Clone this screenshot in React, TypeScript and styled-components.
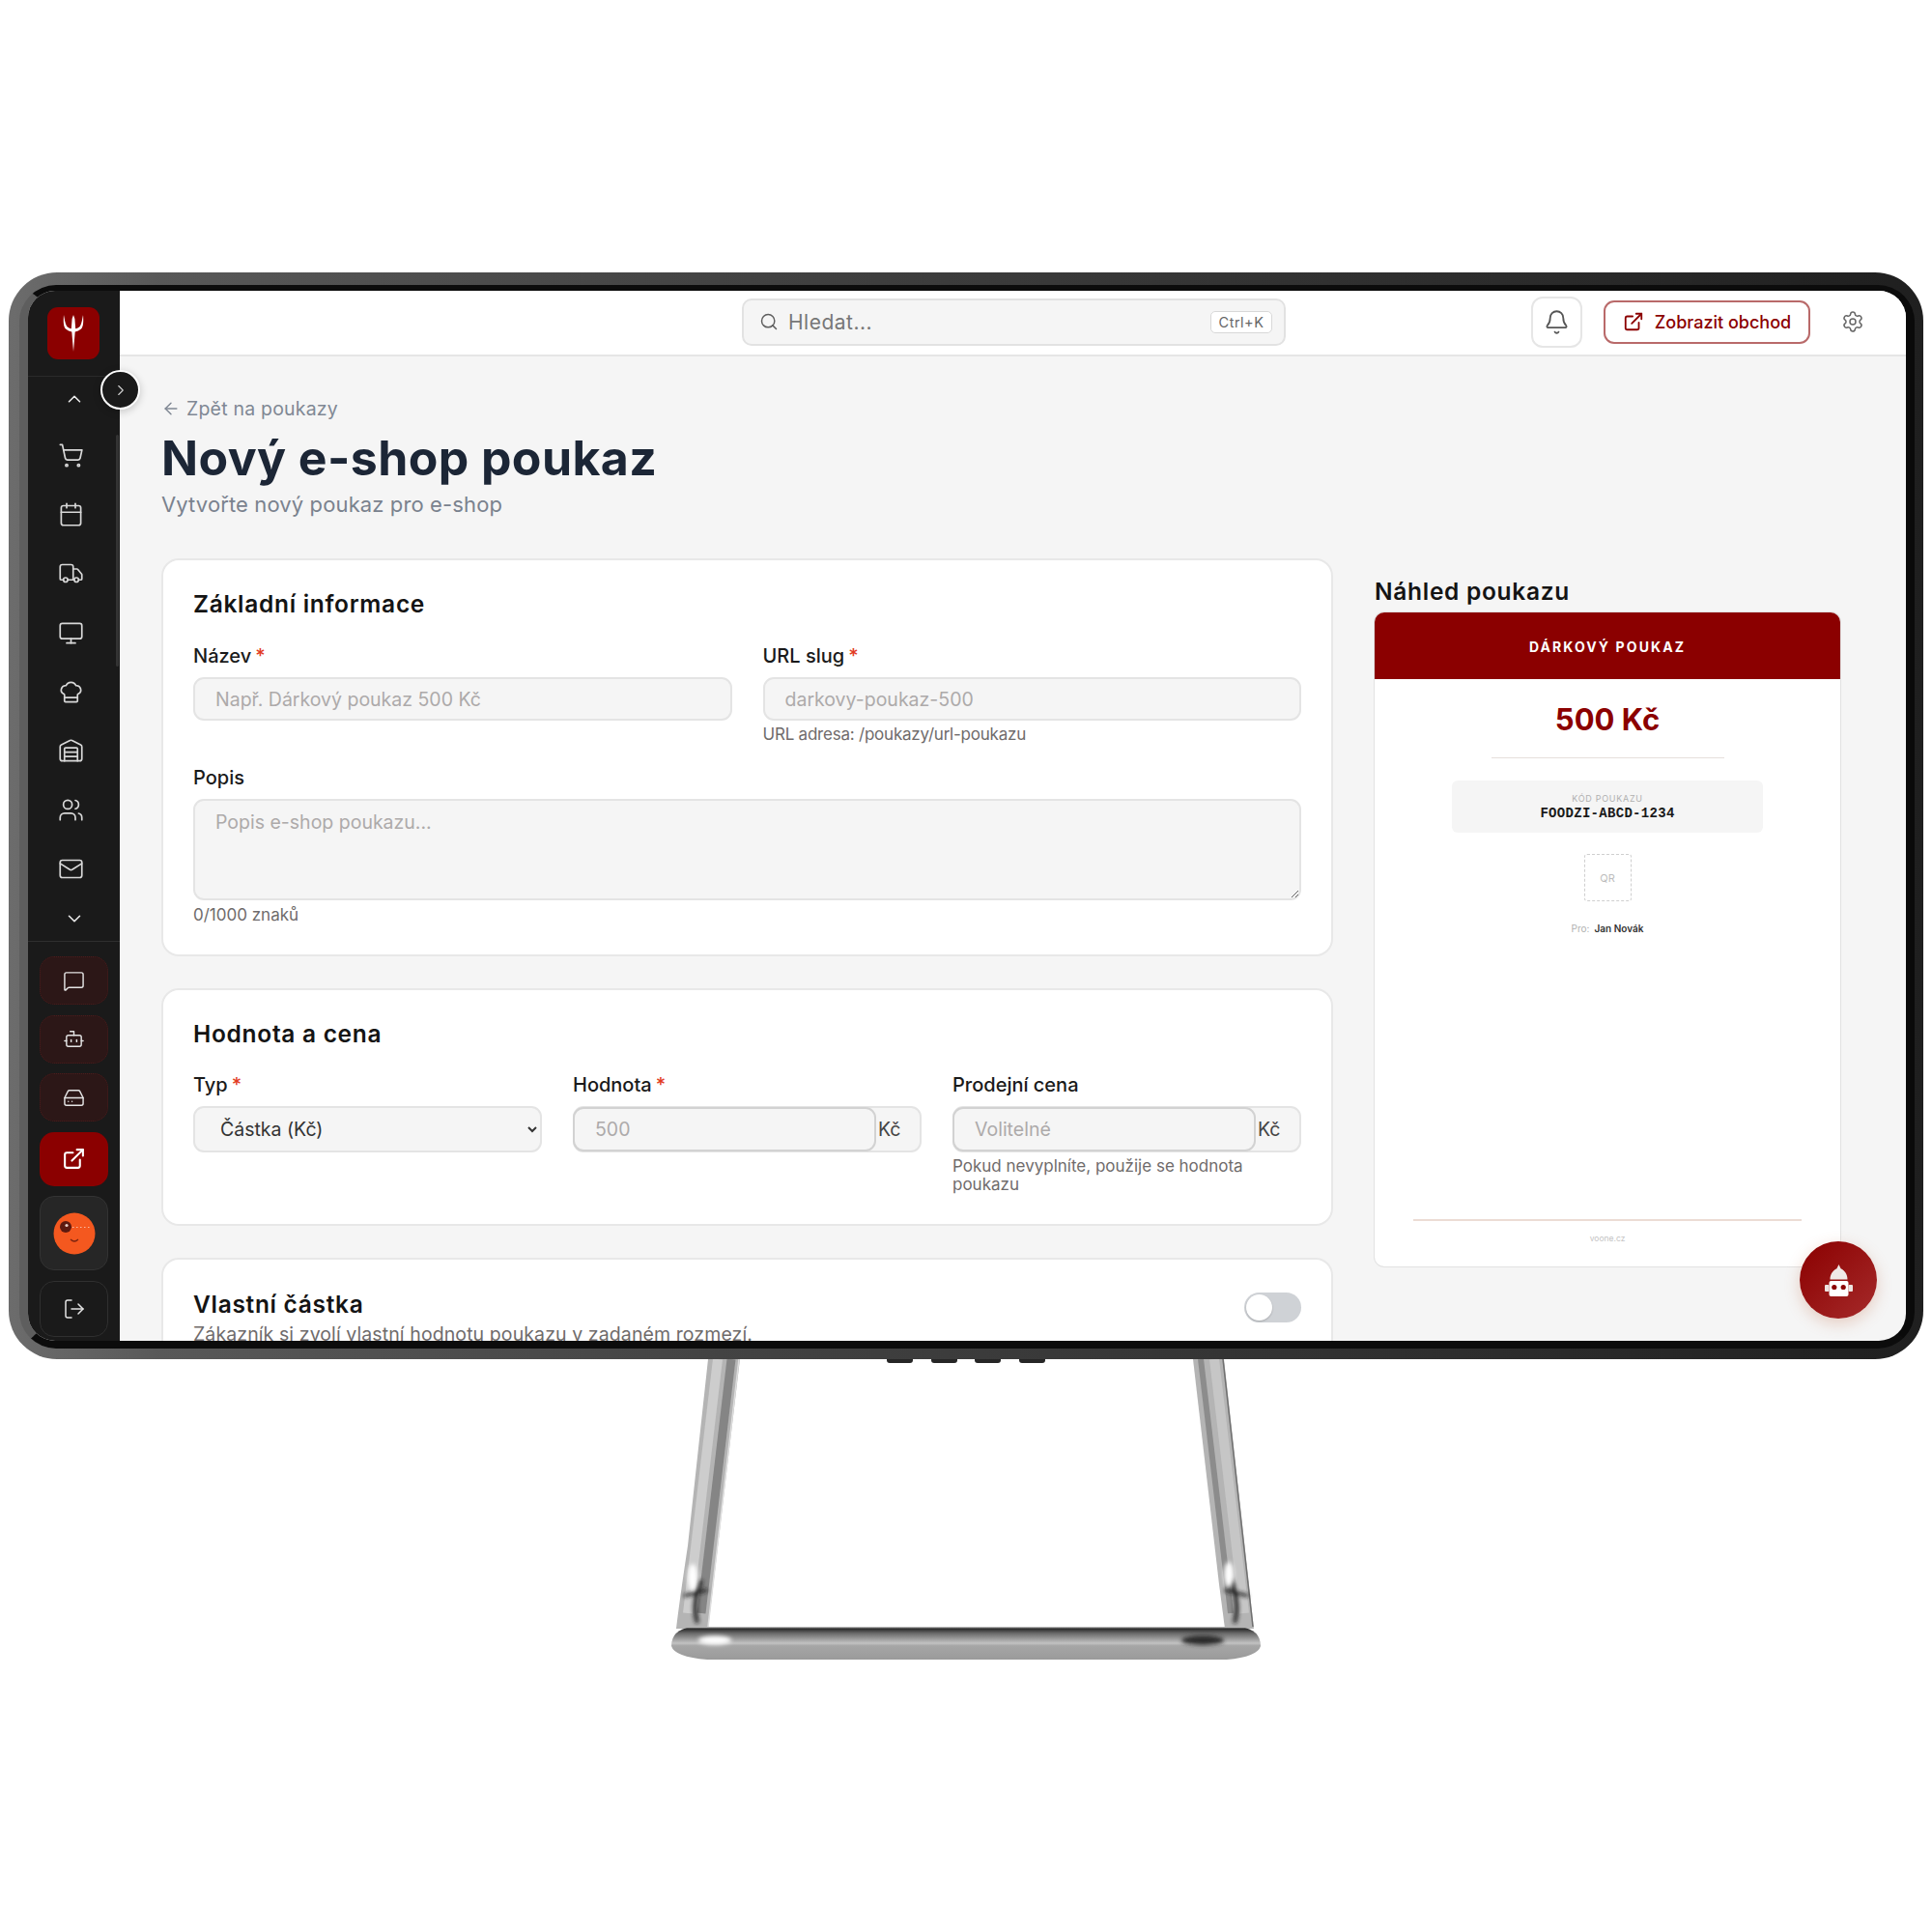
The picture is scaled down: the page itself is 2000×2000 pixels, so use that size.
import React from "react";
import styled, { createGlobalStyle } from "styled-components";
import {
  ArrowLeft,
  Bell,
  Bot,
  Calendar,
  ChefHat,
  ChevronDown,
  ChevronRight,
  ChevronUp,
  ExternalLink,
  HardDrive,
  LogOut,
  Mail,
  MessageSquare,
  Monitor as MonitorIcon,
  Search,
  Settings,
  ShoppingCart,
  Truck,
  Users,
  Warehouse,
} from "lucide-react";

const FONT = `Inter, "Open Sans", "Liberation Sans", sans-serif`;
const RED = "#8b0000";

const Global = createGlobalStyle`
  html, body { margin: 0; background: #fff; }
  * { box-sizing: border-box; }
  body { font-family: ${FONT}; }
  input::placeholder, textarea::placeholder { color: #adaaaa; opacity: 1; }
`;

const Page = styled.div`
  width: 2000px;
  height: 2000px;
  padding-top: 282px;
  display: flex;
  flex-direction: column;
  background: #fff;
  overflow: hidden;
`;

const Bezel = styled.div`
  width: 1982px;
  height: 1125px;
  margin-left: 9px;
  padding: 13px 9px 11px 11px;
  border-radius: 50px;
  background: linear-gradient(90deg, #6c6c6c 0%, #585858 8%, #414141 40%, #282828 85%, #1f1f1f 100%);
`;

const Ring = styled.div`
  width: 100%;
  height: 100%;
  border-style: solid;
  border-width: 6px 9px 8px 9px;
  border-color: #0c0c0c #0a0a0a #0c0c0c #5e5e5e;
  border-radius: 38px;
  background: #0c0c0c;
`;

const Screen = styled.div`
  position: relative;
  width: 100%;
  height: 100%;
  display: flex;
  border-radius: 28px;
  overflow: hidden;
  background: #f5f5f5;
`;

const Sidebar = styled.aside`
  position: relative;
  width: 95px;
  flex: none;
  display: flex;
  flex-direction: column;
  background: #1a1a1a;
`;

const LogoArea = styled.div`
  height: 89px;
  display: flex;
  justify-content: center;
  padding: 17px 1px 0 0;
  border-bottom: 1px solid #2a2a2a;
`;

const LogoBox = styled.div`
  width: 54px;
  height: 54px;
  border-radius: 11px;
  background: ${RED};
`;

const Nav = styled.nav`
  height: 585px;
  display: flex;
  flex-direction: column;
  border-bottom: 1px solid #2e2e2e;
`;

const NavArrow = styled.div<{ $h: number; $lift: number }>`
  height: ${(p) => p.$h}px;
  display: flex;
  align-items: center;
  justify-content: center;
  padding-bottom: ${(p) => p.$lift}px;
  color: #e8e8e8;
`;

const NavItem = styled.div`
  height: 61.2px;
  flex: none;
  display: flex;
  align-items: center;
  justify-content: center;
  padding-right: 6px;
  color: #d8d8d8;
`;

const ScrollThumb = styled.div`
  position: absolute;
  left: 91px;
  top: 149px;
  width: 3px;
  height: 240px;
  border-radius: 2px;
  background: #333;
`;

const SideActions = styled.div`
  display: flex;
  flex-direction: column;
  align-items: center;
  gap: 10.5px;
  padding-top: 15px;
`;

const TintButton = styled.div`
  width: 71px;
  height: 50px;
  display: flex;
  align-items: center;
  justify-content: center;
  border: 1px dotted #4c1c1c;
  border-radius: 15px;
  background: #2c1717;
  color: #e4e4e4;
`;

const RedButton = styled(TintButton)`
  height: 56px;
  border: none;
  background: ${RED};
  color: #fff;
`;

const AvatarBox = styled(TintButton)`
  height: 77px;
  border: 1px solid #333;
  background: #262626;
`;

const LogoutBox = styled(TintButton)`
  height: 58px;
  border: 1px solid #303030;
  background: #1a1a1a;
`;

const CollapseToggle = styled.div`
  position: absolute;
  left: 75px;
  top: 82px;
  width: 41px;
  height: 41px;
  display: flex;
  align-items: center;
  justify-content: center;
  border: 2px solid #fff;
  border-radius: 50%;
  background: #1a1a1a;
  color: #cfcfcf;
  box-shadow: 0 2px 8px rgba(0, 0, 0, 0.2);
  z-index: 3;
`;

const Main = styled.main`
  flex: 1;
  min-width: 0;
  display: flex;
  flex-direction: column;
`;

const Header = styled.header`
  height: 68px;
  flex: none;
  display: flex;
  align-items: center;
  padding: 0 43px 2px 644px;
  background: #fff;
  border-bottom: 2px solid #e6e6e6;
`;

const SearchBox = styled.div`
  width: 563px;
  height: 49px;
  display: flex;
  align-items: center;
  gap: 10px;
  padding: 0 12px 0 16px;
  border: 2px solid #e2e2e2;
  border-radius: 10px;
  background: #f5f5f5;
  color: #5e5e5e;
  font-size: 21px;
`;

const SearchText = styled.span`
  flex: 1;
  color: #777;
  letter-spacing: 0.5px;
`;

const Kbd = styled.span`
  width: 64px;
  height: 23px;
  display: flex;
  align-items: center;
  justify-content: center;
  border: 1px solid #d8d8d8;
  border-radius: 5px;
  background: #fff;
  color: #666;
  font-size: 14.5px;
  letter-spacing: 0.5px;
`;

const BellButton = styled.div`
  margin-left: auto;
  width: 53px;
  height: 53px;
  display: flex;
  align-items: center;
  justify-content: center;
  border: 2px solid #e6e6e6;
  border-radius: 12px;
  background: #fff;
  color: #555;
`;

const ShopButton = styled.div`
  margin-left: 22px;
  width: 214px;
  height: 45px;
  display: flex;
  align-items: center;
  justify-content: center;
  gap: 11px;
  border: 2px solid #b96a6a;
  border-radius: 11px;
  background: #fff;
  color: ${RED};
  font-size: 18px;
  font-weight: 500;
`;

const GearSlot = styled.div`
  margin-left: 32px;
  width: 24px;
  height: 24px;
  color: #666;
`;

const Content = styled.div`
  padding: 42px 0 0 43px;
`;

const BackLink = styled.div`
  height: 24px;
  display: flex;
  align-items: center;
  gap: 6px;
  color: #808894;
  font-size: 19.5px;
  letter-spacing: 0.2px;
`;

const Title = styled.h1`
  margin: 9px 0 0;
  font-size: 50px;
  line-height: 60px;
  font-weight: 700;
  letter-spacing: 0.4px;
  color: #1c2636;
`;

const Subtitle = styled.p`
  margin: 4px 0 0;
  font-size: 22px;
  line-height: 28px;
  color: #7a828e;
  letter-spacing: 0.12px;
`;

const Columns = styled.div`
  display: grid;
  grid-template-columns: 1213px 482px;
  column-gap: 43px;
  margin-top: 42px;
`;

const FormColumn = styled.div`
  display: flex;
  flex-direction: column;
  gap: 33px;
`;

const Card = styled.section`
  padding: 30px 31px 31px;
  border: 2px solid #e8e8e8;
  border-radius: 18px;
  background: #fff;
`;

const CardTitle = styled.h2`
  margin: 0;
  font-size: 24.5px;
  line-height: 30px;
  font-weight: 600;
  color: #141414;
  letter-spacing: 0.7px;
`;

const Grid = styled.div<{ $cols: number; $mt: number }>`
  display: grid;
  grid-template-columns: repeat(${(p) => p.$cols}, 1fr);
  column-gap: 32px;
  margin-top: ${(p) => p.$mt}px;
`;

const Label = styled.label`
  display: block;
  height: 24px;
  margin-bottom: 10px;
  font-size: 20px;
  line-height: 24px;
  font-weight: 500;
  color: #1a1a1a;
`;

const Star = styled.span`
  margin-left: 4px;
  color: #e23b22;
`;

const Input = styled.input`
  display: block;
  width: 100%;
  height: 45px;
  padding: 0 21px;
  border: 2px solid #e4e4e4;
  border-radius: 11px;
  outline: none;
  background: #f5f5f5;
  font-family: ${FONT};
  font-size: 19.5px;
`;

const TextArea = styled.textarea`
  display: block;
  width: 100%;
  height: 105px;
  padding: 10px 21px;
  border: 2px solid #e4e4e4;
  border-radius: 11px;
  outline: none;
  background: #f5f5f5;
  font-family: ${FONT};
  font-size: 19.5px;
`;

const Select = styled.select`
  display: block;
  width: 100%;
  height: 48px;
  padding: 0 18px 0 22px;
  border: 2px solid #e4e4e4;
  border-radius: 11px;
  outline: none;
  background: #f5f5f5;
  color: #333;
  font-family: ${FONT};
  font-size: 19.5px;
`;

const SuffixField = styled.div`
  height: 48px;
  display: flex;
  align-items: center;
  border: 2px solid #e4e4e4;
  border-radius: 11px;
  background: #f5f5f5;
  color: #444;
  font-size: 19.5px;
`;

const SuffixInput = styled(Input)`
  width: 314px;
  height: 46px;
  flex: none;
  margin: -1px 2px 0 -2px;
  border-color: #d2d2d2;
`;

const Hint = styled.div<{ $top: number; $tight?: boolean }>`
  margin-top: ${(p) => p.$top}px;
  font-size: 17px;
  line-height: 19px;
  color: #6f6b6b;
  letter-spacing: ${(p) => (p.$tight ? "-0.22px" : "0")};
`;

const RowGap = styled.div`
  height: 23px;
`;

const ToggleRow = styled.div`
  margin-top: 1px;
  display: flex;
  align-items: flex-start;
  justify-content: space-between;
`;

const SubText = styled.p`
  margin: 3px 0 0;
  font-size: 19.5px;
  line-height: 26px;
  color: #6f6b6b;
  letter-spacing: 0.1px;
`;

const Toggle = styled.div`
  width: 59px;
  height: 31px;
  margin-top: 3px;
  padding: 2px;
  border-radius: 16px;
  background: #cfd2d6;
`;

const Knob = styled.div`
  width: 27px;
  height: 27px;
  border-radius: 50%;
  background: #fff;
  box-shadow: 0 1px 2px rgba(0, 0, 0, 0.2);
`;

const PreviewColumn = styled.div`
  padding-top: 19px;
`;

const PreviewTitle = styled.h3`
  margin: 0 0 7px;
  font-size: 24.5px;
  line-height: 30px;
  font-weight: 600;
  color: #141414;
  letter-spacing: 0.7px;
`;

const Voucher = styled.div`
  height: 677px;
  display: flex;
  flex-direction: column;
  align-items: center;
  border-radius: 10px;
  overflow: hidden;
  background: #fff;
  box-shadow: 0 0 0 1px #e2e2e2;
`;

const VoucherHead = styled.div`
  width: 100%;
  height: 69px;
  padding-top: 2px;
  display: flex;
  align-items: center;
  justify-content: center;
  background: ${RED};
  color: #fff;
  font-size: 14px;
  font-weight: 700;
  letter-spacing: 2.1px;
`;

const Amount = styled.div`
  margin-top: 22px;
  font-size: 31px;
  line-height: 40px;
  font-weight: 700;
  color: ${RED};
`;

const ThinRule = styled.div`
  width: 241px;
  height: 1px;
  margin-top: 19px;
  background: #e6e0dc;
`;

const CodeBox = styled.div`
  width: 322px;
  height: 54px;
  margin-top: 23px;
  padding-top: 1px;
  display: flex;
  flex-direction: column;
  align-items: center;
  justify-content: center;
  border-radius: 6px;
  background: #f5f5f5;
`;

const CodeLabel = styled.div`
  font-size: 9px;
  line-height: 12px;
  color: #b0b0b0;
  letter-spacing: 0.7px;
`;

const CodeValue = styled.div`
  font-family: "Liberation Mono", monospace;
  font-size: 14px;
  line-height: 18px;
  font-weight: 700;
  color: #1a1a1a;
  letter-spacing: 0.3px;
`;

const QrBox = styled.div`
  width: 49px;
  height: 49px;
  margin-top: 22px;
  display: flex;
  align-items: center;
  justify-content: center;
  border: 1px dashed #cfcfcf;
  border-radius: 3px;
  color: #bdbdbd;
  font-size: 11px;
`;

const ForLine = styled.div`
  margin-top: 21px;
  display: flex;
  gap: 5px;
  font-size: 10px;
  line-height: 14px;
  color: #b0b0b0;
`;

const ForName = styled.span`
  font-weight: 600;
  color: #333;
`;

const VoucherFoot = styled.div`
  width: 402px;
  margin-top: auto;
  padding: 12px 0 23px;
  border-top: 2px solid #ecdcd4;
  text-align: center;
  font-size: 8.5px;
  line-height: 12px;
  color: #c4c4c4;
`;

const Fab = styled.div`
  position: absolute;
  right: 30px;
  bottom: 23px;
  width: 80px;
  height: 80px;
  display: flex;
  align-items: center;
  justify-content: center;
  border-radius: 50%;
  background: linear-gradient(135deg, #8b0000, #a52a2a);
  box-shadow: 0 5px 16px rgba(190, 100, 60, 0.28);
  z-index: 3;
`;

const StandSvg = styled.svg`
  display: block;
  flex: none;
  margin-left: 690px;
`;

const navIcons = [ShoppingCart, Calendar, Truck, MonitorIcon, ChefHat, Warehouse, Users, Mail];

function TridentLogo() {
  return (
    <svg width="54" height="54" viewBox="0 0 54 54">
      <path
        fill="#fff"
        d="M17 8C16.5 14 16.5 20 19 22.5C21 24 23 25 25.3 25.5L27 46L28.7 25.5C31 25 33 24 35 22.5C37.5 20 37.5 14 37 8C36 13 35.5 17 34 19.5C33 21 31 22 29.2 22.3L28.4 12L27 8L25.6 12L24.8 22.3C23 22 21 21 20 19.5C18.5 17 18 13 17 8Z"
      />
    </svg>
  );
}

function AvatarFace() {
  return (
    <svg width="44" height="44" viewBox="0 0 44 44">
      <circle cx="22" cy="22" r="21.5" fill="#f4581f" />
      <circle cx="13" cy="15" r="6" fill="#5c1a10" />
      <circle cx="14" cy="13.5" r="1.6" fill="#e8d0c8" />
      <path d="M20 15.5H38" stroke="#f7b9a0" strokeWidth="1" strokeDasharray="1.5 2.5" />
      <path d="M18 28Q22 32 26 28" stroke="#7a2410" strokeWidth="1.2" fill="none" />
    </svg>
  );
}

function RobotMark() {
  return (
    <svg width="29" height="33" viewBox="0 0 29 33">
      <path fill="#efe9e7" d="M14.5 0L16.6 4.2C20.5 6 23.5 10 23.5 15.5H5.5C5.5 10 8.5 6 12.4 4.2Z" />
      <rect x="4.5" y="17" width="20" height="16" rx="2" fill="#fff" />
      <rect x="0" y="21" width="4.5" height="7" rx="1" fill="#ece4e1" />
      <rect x="24.5" y="21" width="4.5" height="7" rx="1" fill="#ece4e1" />
      <circle cx="9.8" cy="23.5" r="2.6" fill="#8b0000" />
      <circle cx="19.2" cy="23.5" r="2.6" fill="#8b0000" />
    </svg>
  );
}

// monitor foot and the four small buttons under the bezel, in page coordinates
function Stand() {
  return (
    <StandSvg width="620" height="320" viewBox="690 1407 620 320">
      <defs>
        <linearGradient id="baseFill" x1="0" y1="0" x2="0" y2="1">
          <stop offset="0" stopColor="#dcdcdc" />
          <stop offset="0.06" stopColor="#2a2a2a" />
          <stop offset="0.2" stopColor="#6a6a6a" />
          <stop offset="0.5" stopColor="#c2c2c2" />
          <stop offset="0.58" stopColor="#a6a6a6" />
          <stop offset="1" stopColor="#9a9a9a" />
        </linearGradient>
        <filter id="soft" x="-60%" y="-60%" width="220%" height="220%">
          <feGaussianBlur stdDeviation="2" />
        </filter>
      </defs>
      {[918, 964, 1009, 1055].map((x) => (
        <rect key={x} x={x} y="1404" width="27" height="7" rx="3" fill="#262626" />
      ))}
      <path fill="#b4b4b4" d="M733 1407H766L733 1686H700Q703 1660 712 1600Z" />
      <path fill="#b4b4b4" d="M1235 1407H1267L1298 1686H1268L1262 1640Z" />
      <g fill="none">
        <path d="M743 1407L712 1670" stroke="#cdcdcd" strokeWidth="10" />
        <path d="M757 1407L726 1670" stroke="#858585" strokeWidth="9" />
        <path d="M765 1407L733 1684" stroke="#dedede" strokeWidth="1.5" />
        <path d="M1257 1407L1288 1670" stroke="#c6c6c6" strokeWidth="10" />
        <path d="M1243 1407L1274 1670" stroke="#8c8c8c" strokeWidth="6" />
        <path d="M1266 1407L1297 1684" stroke="#707070" strokeWidth="1.5" />
      </g>
      <g fill="none" stroke="#1e1e1e" filter="url(#soft)">
        <path d="M726 1636Q716 1660 722 1680" strokeWidth="4" />
        <path d="M708 1652L732 1646" strokeWidth="3" />
        <path d="M1274 1636Q1284 1660 1278 1680" strokeWidth="4" />
        <path d="M1292 1652L1268 1646" strokeWidth="3" />
      </g>
      <ellipse cx="717" cy="1633" rx="5" ry="14" fill="#fff" filter="url(#soft)" />
      <ellipse cx="1272" cy="1630" rx="5" ry="13" fill="#fff" filter="url(#soft)" />
      <path
        fill="url(#baseFill)"
        d="M716 1684L1284 1684Q1305 1687 1305 1704Q1302 1715 1270 1718L732 1718Q698 1715 695 1704Q695 1687 716 1684Z"
      />
      <ellipse cx="740" cy="1698" rx="17" ry="4.5" fill="#fff" filter="url(#soft)" />
      <ellipse cx="1245" cy="1698" rx="22" ry="5" fill="#2c2c2c" filter="url(#soft)" />
    </StandSvg>
  );
}

export default function App() {
  return (
    <Page>
      <Global />
      <Bezel>
        <Ring>
          <Screen>
            <Sidebar>
              <LogoArea>
                <LogoBox>
                  <TridentLogo />
                </LogoBox>
              </LogoArea>
              <Nav>
                <NavArrow $h={51} $lift={6}>
                  <ChevronUp size={22} strokeWidth={1.75} />
                </NavArrow>
                {navIcons.map((Icon, index) => (
                  <NavItem key={index}>
                    <Icon size={27} strokeWidth={1.5} />
                  </NavItem>
                ))}
                <NavArrow $h={43} $lift={2}>
                  <ChevronDown size={22} strokeWidth={1.75} />
                </NavArrow>
              </Nav>
              <ScrollThumb />
              <SideActions>
                <TintButton>
                  <MessageSquare size={23} strokeWidth={1.5} />
                </TintButton>
                <TintButton>
                  <Bot size={23} strokeWidth={1.5} />
                </TintButton>
                <TintButton>
                  <HardDrive size={23} strokeWidth={1.5} />
                </TintButton>
                <RedButton>
                  <ExternalLink size={25} strokeWidth={2} />
                </RedButton>
                <AvatarBox>
                  <AvatarFace />
                </AvatarBox>
                <LogoutBox>
                  <LogOut size={24} strokeWidth={1.5} />
                </LogoutBox>
              </SideActions>
            </Sidebar>
            <CollapseToggle>
              <ChevronRight size={18} strokeWidth={1.5} />
            </CollapseToggle>
            <Main>
              <Header>
                <SearchBox>
                  <Search size={20} strokeWidth={1.75} />
                  <SearchText>Hledat...</SearchText>
                  <Kbd>Ctrl+K</Kbd>
                </SearchBox>
                <BellButton>
                  <Bell size={27} strokeWidth={1.6} />
                </BellButton>
                <ShopButton>
                  <ExternalLink size={22} strokeWidth={2} />
                  Zobrazit obchod
                </ShopButton>
                <GearSlot>
                  <Settings size={24} strokeWidth={1.5} />
                </GearSlot>
              </Header>
              <Content>
                <BackLink>
                  <ArrowLeft size={20} strokeWidth={1.75} />
                  Zpět na poukazy
                </BackLink>
                <Title>Nový e-shop poukaz</Title>
                <Subtitle>Vytvořte nový poukaz pro e-shop</Subtitle>
                <Columns>
                  <FormColumn>
                    <Card>
                      <CardTitle>Základní informace</CardTitle>
                      <Grid $cols={2} $mt={27}>
                        <div>
                          <Label>
                            Název<Star>*</Star>
                          </Label>
                          <Input placeholder="Např. Dárkový poukaz 500 Kč" />
                        </div>
                        <div>
                          <Label>
                            URL slug<Star>*</Star>
                          </Label>
                          <Input placeholder="darkovy-poukaz-500" />
                          <Hint $top={5} $tight>
                            URL adresa: /poukazy/url-poukazu
                          </Hint>
                        </div>
                      </Grid>
                      <RowGap />
                      <Label>Popis</Label>
                      <TextArea placeholder="Popis e-shop poukazu..." />
                      <Hint $top={6}>0/1000 znaků</Hint>
                    </Card>
                    <Card>
                      <CardTitle>Hodnota a cena</CardTitle>
                      <Grid $cols={3} $mt={26}>
                        <div>
                          <Label>
                            Typ<Star>*</Star>
                          </Label>
                          <Select defaultValue="amount">
                            <option value="amount">Částka (Kč)</option>
                          </Select>
                        </div>
                        <div>
                          <Label>
                            Hodnota<Star>*</Star>
                          </Label>
                          <SuffixField>
                            <SuffixInput placeholder="500" />
                            Kč
                          </SuffixField>
                        </div>
                        <div>
                          <Label>Prodejní cena</Label>
                          <SuffixField>
                            <SuffixInput placeholder="Volitelné" />
                            Kč
                          </SuffixField>
                          <Hint $top={5}>Pokud nevyplníte, použije se hodnota poukazu</Hint>
                        </div>
                      </Grid>
                    </Card>
                    <Card>
                      <ToggleRow>
                        <div>
                          <CardTitle>Vlastní částka</CardTitle>
                          <SubText>Zákazník si zvolí vlastní hodnotu poukazu v zadaném rozmezí.</SubText>
                        </div>
                        <Toggle>
                          <Knob />
                        </Toggle>
                      </ToggleRow>
                    </Card>
                  </FormColumn>
                  <PreviewColumn>
                    <PreviewTitle>Náhled poukazu</PreviewTitle>
                    <Voucher>
                      <VoucherHead>DÁRKOVÝ POUKAZ</VoucherHead>
                      <Amount>500 Kč</Amount>
                      <ThinRule />
                      <CodeBox>
                        <CodeLabel>KÓD POUKAZU</CodeLabel>
                        <CodeValue>FOODZI-ABCD-1234</CodeValue>
                      </CodeBox>
                      <QrBox>QR</QrBox>
                      <ForLine>
                        Pro: <ForName>Jan Novák</ForName>
                      </ForLine>
                      <VoucherFoot>voone.cz</VoucherFoot>
                    </Voucher>
                  </PreviewColumn>
                </Columns>
              </Content>
            </Main>
            <Fab>
              <RobotMark />
            </Fab>
          </Screen>
        </Ring>
      </Bezel>
      <Stand />
    </Page>
  );
}
